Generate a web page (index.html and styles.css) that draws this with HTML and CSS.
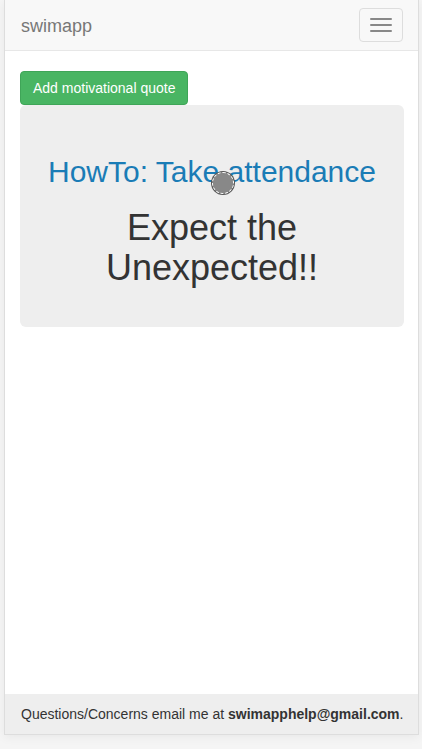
FILE: index.html
```html
<!DOCTYPE html>
<html>
<head>
<meta charset="utf-8">
<title>swimapp</title>
<link rel="stylesheet" href="styles.css">
</head>
<body>
<div class="page">
  <nav class="navbar">
    <a class="brand" href="#">swimapp</a>
    <button class="toggle" type="button" aria-label="Toggle navigation">
      <span class="bar"></span><span class="bar"></span><span class="bar"></span>
    </button>
  </nav>
  <main class="content">
    <button class="btn-success" type="button">Add motivational quote</button>
    <section class="jumbotron">
      <h2 class="howto"><a href="#">HowTo: Take attendance</a></h2>
      <h1 class="quote">Expect the Unexpected!!</h1>
    </section>
  </main>
  <footer class="footer">Questions/Concerns email me at <strong>swimapphelp@gmail.com</strong>.</footer>
</div>
<div class="cursor"></div>
</body>
</html>
```

FILE: styles.css
```css
* { box-sizing: border-box; }
html, body { margin: 0; padding: 0; }
body {
  background: #f5f5f5;
  font-family: "Liberation Sans", Arial, Helvetica, sans-serif;
  font-size: 14px;
  line-height: 20px;
  color: #333;
  height: 749px;
}
.page {
  margin-left: 4px;
  width: 415px;
  height: 735px;
  background: #fff;
  border: 1px solid #ddd;
  border-top: 0;
  box-shadow: 0 2px 10px rgba(0,0,0,0.06);
  display: flex;
  flex-direction: column;
}
.navbar {
  height: 51px;
  flex: none;
  background: #f8f8f8;
  border-bottom: 1px solid #e7e7e7;
  display: flex;
  align-items: center;
  justify-content: space-between;
  padding: 0 15px 0 16px;
}
.brand {
  color: #777;
  font-size: 18px;
  line-height: 20px;
  text-decoration: none;
  margin-top: 1px;
}
.toggle {
  width: 44px;
  height: 34px;
  border: 1px solid #ddd;
  border-radius: 4px;
  background: transparent;
  padding: 9px 10px;
  display: flex;
  flex-direction: column;
  gap: 4px;
}
.bar {
  display: block;
  width: 22px;
  height: 2px;
  border-radius: 1px;
  background: #888;
}
.content {
  flex: 1;
  padding: 20px 14px 0 15px;
}
.btn-success {
  display: block;
  height: 34px;
  padding: 6px 12px;
  font-family: inherit;
  font-size: 14px;
  line-height: 20px;
  color: #fff;
  background: #49b563;
  border: 1px solid #3fa558;
  border-radius: 4px;
}
.jumbotron {
  background: #eee;
  border-radius: 6px;
  padding: 30px 15px 30px;
  text-align: center;
}
.howto {
  margin: 20px 0 10px;
  font-size: 30px;
  font-weight: 500;
  line-height: 33px;
}
.howto a { color: #1a7cb6; text-decoration: none; }
.quote {
  margin: 20px 0 10px;
  font-size: 36px;
  font-weight: 500;
  line-height: 39.6px;
  color: #333;
}
.footer {
  flex: none;
  height: 40px;
  background: #eee;
  padding: 10px 0 10px 16px;
  line-height: 20px;
  color: #333;
  white-space: nowrap;
}
.cursor {
  position: absolute;
  left: 212px;
  top: 172px;
  width: 22px;
  height: 22px;
  border-radius: 50%;
  background: #888;
  border: 1px dashed #fff;
  box-shadow: 0 0 0 1px #555;
}
```
